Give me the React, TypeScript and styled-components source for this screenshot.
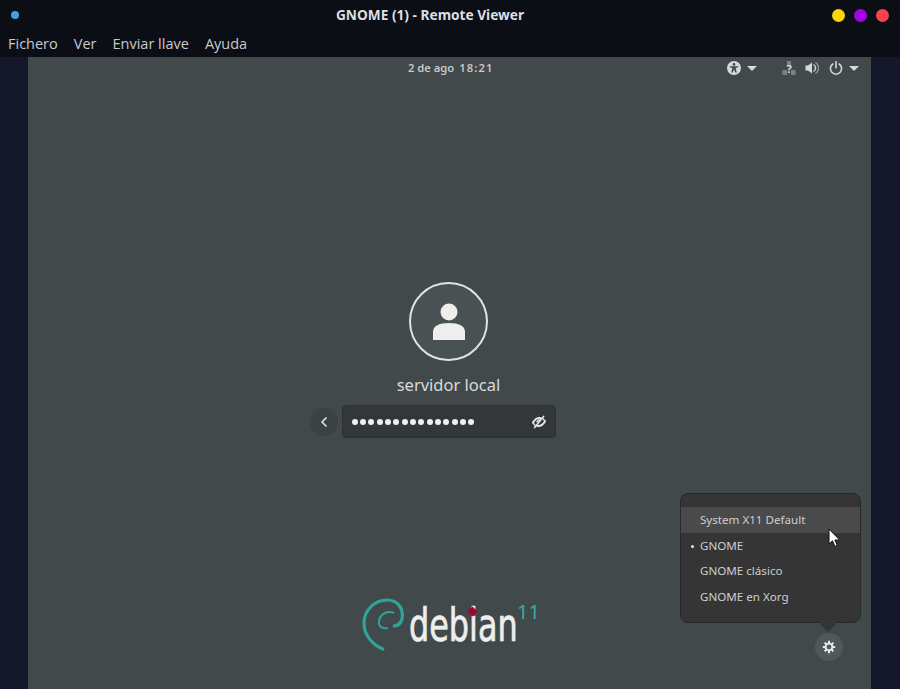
import styled, { createGlobalStyle } from 'styled-components';
import { ChevronLeft } from 'lucide-react';

const GlobalStyle = createGlobalStyle`
  html, body {
    margin: 0;
    padding: 0;
    background: #0c0e15;
  }
`;

const Window = styled.div`
  width: 900px;
  height: 689px;
  display: flex;
  flex-direction: column;
  overflow: hidden;
  background: #0c0e15;
  font-family: "Noto Sans", sans-serif;
`;

const TitleBar = styled.div`
  height: 30px;
  flex: none;
  display: flex;
  align-items: center;
  justify-content: space-between;
  padding: 0 11px;
  position: relative;
`;

const Title = styled.div`
  position: absolute;
  left: 0;
  right: 40px;
  text-align: center;
  top: 5px;
  color: #dcdee3;
  font-size: 13.7px;
  font-weight: 700;
  line-height: 20px;
`;

const Dot = styled.span<{ $size: number; $color: string }>`
  display: block;
  width: ${(p) => p.$size}px;
  height: ${(p) => p.$size}px;
  border-radius: 50%;
  background: ${(p) => p.$color};
`;

const Controls = styled.div`
  display: flex;
  gap: 9px;
`;

const MenuBar = styled.div`
  height: 27px;
  flex: none;
  display: flex;
  align-items: center;
  gap: 16px;
  padding: 0 8px;
  color: #c8cad0;
  font-family: "Open Sans", sans-serif;
  font-size: 14.5px;
`;

const Desktop = styled.div`
  flex: 1;
  display: flex;
  justify-content: center;
  background: #14172a;
`;

const Stage = styled.div`
  width: 843px;
  margin-right: 1px;
  position: relative;
  display: flex;
  flex-direction: column;
  background: #42494b;
  color: #dcdcdc;
`;

const TopPanel = styled.div`
  height: 22px;
  flex: none;
  display: flex;
  align-items: center;
  position: relative;
`;

const Clock = styled.div`
  position: absolute;
  left: 380px;
  top: 3px;
  display: flex;
  gap: 5px;
  line-height: 16px;
  font-size: 11.2px;
  font-weight: 600;
  color: #c6c8c8;
  white-space: pre;
`;

const ClockTime = styled.span`
  letter-spacing: 1.1px;
`;

const Tray = styled.div`
  margin-left: auto;
  margin-right: 12px;
  display: flex;
  align-items: center;
  color: #d8d8d8;
`;

const Caret = styled.span<{ $gap: number }>`
  display: block;
  width: 0;
  height: 0;
  margin: 0 ${(p) => p.$gap}px 0 6px;
  border-left: 5px solid transparent;
  border-right: 5px solid transparent;
  border-top: 5px solid #d8d8d8;
`;

const TrayIcon = styled.svg<{ $gap?: number }>`
  display: block;
  margin-right: ${(p) => p.$gap ?? 0}px;
`;

const Login = styled.div`
  margin-top: 203px;
  display: flex;
  flex-direction: column;
  align-items: center;
  margin-right: 2px;
`;

const Avatar = styled.div`
  width: 75px;
  height: 75px;
  border: 2px solid #e2e3e1;
  border-radius: 50%;
  background: #495153;
  display: flex;
  align-items: center;
  justify-content: center;
`;

const UserName = styled.div`
  margin-top: 13px;
  font-size: 16.5px;
  line-height: 22px;
  color: #d9dada;
`;

const PasswordRow = styled.div`
  margin-top: 9px;
  display: flex;
  align-items: center;
  gap: 4px;
`;

const RoundButton = styled.div`
  width: 28px;
  height: 28px;
  border-radius: 50%;
  background: #3b4244;
  display: flex;
  align-items: center;
  justify-content: center;
  color: #e4e4e4;
`;

const RowSpacer = styled.div`
  width: 28px;
`;

const PasswordField = styled.div`
  width: 214px;
  height: 33px;
  box-sizing: border-box;
  border: 1px solid #2c3031;
  border-radius: 4px;
  background: #33373a;
  display: flex;
  align-items: center;
  justify-content: space-between;
  padding: 0 9px;
  color: #e6e6e6;
`;

const Bullets = styled.div`
  display: flex;
  gap: 2.35px;
`;

const Bullet = styled.span`
  width: 6px;
  height: 6px;
  border-radius: 50%;
  background: #f0f0f0;
`;

const Logo = styled.div`
  position: absolute;
  left: 332px;
  top: 538px;
  width: 190px;
  height: 60px;
`;

const Swirl = styled.svg`
  position: absolute;
  left: -5px;
  top: -3px;
`;

const Wordmark = styled.div`
  position: absolute;
  left: 48.5px;
  top: 0;
  font-family: "DejaVu Sans", sans-serif;
  font-stretch: condensed;
  font-size: 46px;
  line-height: 60px;
  color: #eeeeee;
  -webkit-text-stroke: 0.7px #eeeeee;
  transform: scaleX(0.77);
  transform-origin: left center;
`;

const Diamond = styled.span`
  position: absolute;
  left: 108.5px;
  top: 12.5px;
  width: 7px;
  height: 7px;
  background: #a80030;
  transform: rotate(45deg);
`;

const Version = styled.div`
  position: absolute;
  left: 157px;
  top: 6px;
  font-size: 20px;
  line-height: 22px;
  color: #2fb0a3;
`;

const SessionMenu = styled.div`
  position: absolute;
  left: 652px;
  top: 436px;
  width: 181px;
  height: 130px;
  box-sizing: border-box;
  padding-top: 13px;
  border: 1px solid #272a2b;
  border-radius: 8px;
  background: #353535;
  font-size: 11.6px;
  color: #cfcfcf;

  &::after {
    content: '';
    position: absolute;
    left: 137px;
    bottom: -10px;
    border-left: 10px solid transparent;
    border-right: 10px solid transparent;
    border-top: 10px solid #353535;
  }
`;

const MenuItem = styled.div<{ $active?: boolean }>`
  height: 25.5px;
  display: flex;
  align-items: center;
  padding-left: 19px;
  position: relative;
  background: ${(p) => (p.$active ? '#4a4a4a' : 'transparent')};
`;

const ItemDot = styled.span`
  position: absolute;
  left: 10px;
  top: 12px;
  width: 3px;
  height: 3px;
  border-radius: 50%;
  background: #e4e4e4;
`;

const GearButton = styled(RoundButton)`
  position: absolute;
  left: 787px;
  top: 576px;
  background: #50585b;
`;

const Cursor = styled.svg`
  position: absolute;
  left: 800px;
  top: 471px;
`;

const sessions = ['System X11 Default', 'GNOME', 'GNOME clásico', 'GNOME en Xorg'];

export default function App() {
  return (
    <Window>
      <GlobalStyle />
      <TitleBar>
        <Dot $size={8} $color="#3aa6e8" />
        <Title>GNOME (1) - Remote Viewer</Title>
        <Controls>
          <Dot $size={13} $color="#ffd500" />
          <Dot $size={13} $color="#a800e6" />
          <Dot $size={13} $color="#ff4050" />
        </Controls>
      </TitleBar>
      <MenuBar>
        <span>Fichero</span>
        <span>Ver</span>
        <span>Enviar llave</span>
        <span>Ayuda</span>
      </MenuBar>
      <Desktop>
        <Stage>
          <TopPanel>
            <Clock>
              <span>2 de ago</span>
              <ClockTime>18:21</ClockTime>
            </Clock>
            <Tray>
              <TrayIcon width="14" height="14" viewBox="0 0 14 14">
                <circle cx="7" cy="7" r="7" fill="#d8d8d8" />
                <circle cx="7" cy="3.4" r="1.3" fill="#42494b" />
                <path d="M2.8 5.2 L11.2 5.2 L11.2 6.2 L8.6 7 L9.8 11.4 L8.4 11.6 L7 8.6 L5.6 11.6 L4.2 11.4 L5.4 7 L2.8 6.2 Z" fill="#42494b" />
              </TrayIcon>
              <Caret $gap={25} />
              <TrayIcon width="14" height="14" viewBox="0 0 14 14" $gap={9}>
                <path d="M5 0h4v4H5z M0.5 9h4.5v5H0.5z M9 9h4.5v5H9z" fill="#7b8284" />
                <text x="7" y="12" fontSize="11" fontWeight="700" textAnchor="middle" fill="#e0e0e0" fontFamily="Noto Sans">?</text>
              </TrayIcon>
              <TrayIcon width="14" height="14" viewBox="0 0 14 14" $gap={10}>
                <path d="M0.5 4.5h2.5L7 1.5v11L3 9.5H0.5z" fill="#d8d8d8" />
                <path d="M8.5 3.5a4 4 0 0 1 0 7" stroke="#d8d8d8" strokeWidth="1.4" fill="none" />
                <path d="M10.5 1.5a6.5 6.5 0 0 1 0 11" stroke="#8f9596" strokeWidth="1.4" fill="none" />
              </TrayIcon>
              <TrayIcon width="14" height="14" viewBox="0 0 14 14">
                <path d="M7 0.8v6" stroke="#d8d8d8" strokeWidth="1.6" strokeLinecap="round" />
                <path d="M3.8 3a5.6 5.6 0 1 0 6.4 0" stroke="#d8d8d8" strokeWidth="1.6" fill="none" strokeLinecap="round" />
              </TrayIcon>
              <Caret $gap={0} />
            </Tray>
          </TopPanel>
          <Login>
            <Avatar>
              <svg width="36" height="40" viewBox="0 0 36 40">
                <circle cx="18" cy="10" r="8.5" fill="#eeeeec" />
                <path d="M2 38v-8c0-6 6-9 16-9s16 3 16 9v8z" fill="#eeeeec" />
              </svg>
            </Avatar>
            <UserName>servidor local</UserName>
            <PasswordRow>
              <RoundButton>
                <ChevronLeft size={16} strokeWidth={2.6} />
              </RoundButton>
              <PasswordField>
                <Bullets>
                  {Array.from({ length: 15 }).map((_, i) => (
                    <Bullet key={i} />
                  ))}
                </Bullets>
                <svg width="14" height="14" viewBox="0 0 14 14">
                  <path d="M1 7.6C3 4 5.8 2.6 8.4 3 M13 6.2C11 9.8 8.2 11.4 5.4 11" stroke="#e6e6e6" strokeWidth="2" fill="none" strokeLinecap="round" />
                  <path d="M1.2 8C2 9.6 3 10.4 4 10.8 M12.8 6C12 4.6 11.4 4 10.4 3.4" stroke="#e6e6e6" strokeWidth="1.4" fill="none" />
                  <path d="M2.6 12.6L11.6 1.4" stroke="#e6e6e6" strokeWidth="1.6" strokeLinecap="round" />
                  <path d="M5 7.4a2.4 2.4 0 0 1 3-2.2" stroke="#e6e6e6" strokeWidth="1.5" fill="none" />
                </svg>
              </PasswordField>
              <RowSpacer />
            </PasswordRow>
          </Login>
          <Logo>
            <Swirl width="60" height="62" viewBox="0 0 60 62">
              <path
                d="M38 34 C43 34 46 31 47 27 C49 17 43 8 32 8 C19 8 9 19 9 31 C9 44 18 53 29 57.5"
                fill="none"
                stroke="#2fa59a"
                strokeWidth="3.2"
              />
              <path
                d="M39 21 C33 18 25 22 24 29 C23 35 28 37 33 36"
                fill="none"
                stroke="#2fa59a"
                strokeWidth="2"
              />
            </Swirl>
            <Wordmark>debian</Wordmark>
            <Diamond />
            <Version>11</Version>
          </Logo>
          <SessionMenu>
            {sessions.map((s, i) => (
              <MenuItem key={s} $active={i === 0}>
                {i === 1 && <ItemDot />}
                {s}
              </MenuItem>
            ))}
          </SessionMenu>
          <GearButton>
            <svg width="14" height="14" viewBox="0 0 14 14">
              <circle cx="7" cy="7" r="3.4" fill="none" stroke="#e8e8e8" strokeWidth="2" />
              <path d="M7 0.8v2.2M7 11v2.2M0.8 7h2.2M11 7h2.2M2.6 2.6l1.6 1.6M9.8 9.8l1.6 1.6M2.6 11.4l1.6-1.6M9.8 4.2l1.6-1.6" stroke="#e8e8e8" strokeWidth="2" />
            </svg>
          </GearButton>
          <Cursor width="13" height="20" viewBox="0 0 13 20">
            <path d="M1 1v15l3.5-3.2 2.4 5.6 2.4-1-2.4-5.4h4.8z" fill="#ffffff" stroke="#111" strokeWidth="1" />
          </Cursor>
        </Stage>
      </Desktop>
    </Window>
  );
}
